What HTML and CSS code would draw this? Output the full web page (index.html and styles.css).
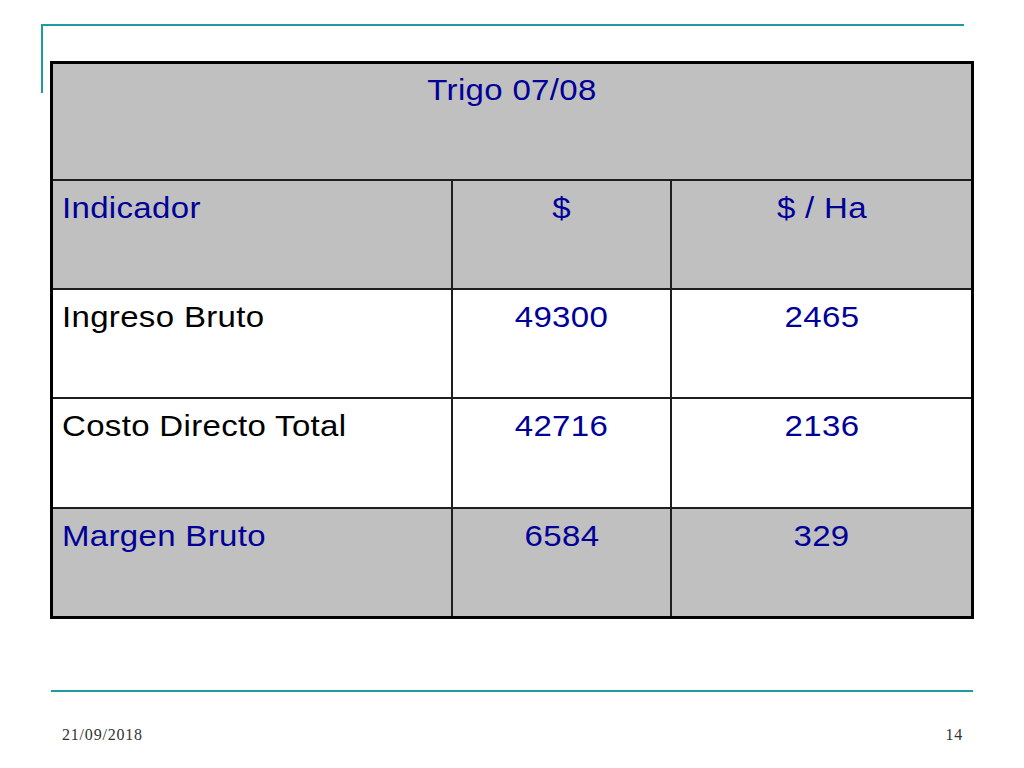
FILE: index.html
```html
<!DOCTYPE html>
<html lang="es">
<head>
<meta charset="utf-8">
<title>Trigo 07/08</title>
<link rel="stylesheet" href="styles.css">
</head>
<body>
<div class="slide">
  <div class="bracket"></div>
  <div class="grid">
    <div class="cell title gray blue"><span class="t">Trigo 07/08</span></div>
    <div class="cell gray blue"><span class="t">Indicador</span></div>
    <div class="cell gray blue center"><span class="t">$</span></div>
    <div class="cell gray blue center"><span class="t">$ / Ha</span></div>
    <div class="cell white"><span class="t">Ingreso Bruto</span></div>
    <div class="cell white blue center"><span class="t">49300</span></div>
    <div class="cell white blue center"><span class="t">2465</span></div>
    <div class="cell white"><span class="t">Costo Directo Total</span></div>
    <div class="cell white blue center"><span class="t">42716</span></div>
    <div class="cell white blue center"><span class="t">2136</span></div>
    <div class="cell gray blue"><span class="t">Margen Bruto</span></div>
    <div class="cell gray blue center"><span class="t">6584</span></div>
    <div class="cell gray blue center"><span class="t">329</span></div>
  </div>
  <div class="rule"></div>
  <div class="footer">
    <span>21/09/2018</span>
    <span>14</span>
  </div>
</div>
</body>
</html>
```

FILE: styles.css
```css
html, body {
  margin: 0;
  padding: 0;
  background: #ffffff;
}

.slide {
  position: relative;
  width: 1024px;
  height: 768px;
  overflow: hidden;
  padding-top: 61px;
  box-sizing: border-box;
}

.bracket {
  position: absolute;
  left: 41px;
  top: 24px;
  width: 921px;
  height: 67px;
  border-top: 2px solid #1c9c9c;
  border-left: 2px solid #1c9c9c;
}

.grid {
  margin-left: 50px;
  width: 918px;
  display: grid;
  grid-template-columns: 398px 217px 299px;
  grid-template-rows: 115px 107px 107px 108px 107px;
  gap: 2px;
  background: #1e1e1e;
  border: 3px solid #000000;
}

.cell {
  font-family: "Liberation Sans", Arial, sans-serif;
  font-size: 30px;
  line-height: 36px;
  letter-spacing: 0.3px;
  color: #000000;
  padding: 9px 10px 0 9px;
}

.t {
  display: inline-block;
  transform: scaleX(1.1);
  transform-origin: left center;
}

.center .t,
.title .t {
  transform-origin: center center;
}

.title {
  grid-column: 1 / -1;
  text-align: center;
  padding-top: 8px;
}

.center {
  text-align: center;
  padding-left: 0;
  padding-right: 0;
}

.gray {
  background: #c0c0c0;
}

.white {
  background: #ffffff;
}

.blue {
  color: #000099;
}

.rule {
  margin-left: 51px;
  width: 922px;
  height: 2px;
  margin-top: 71px;
  background: #1c9c9c;
}

.footer {
  display: flex;
  justify-content: space-between;
  margin-left: 62px;
  width: 901px;
  margin-top: 34px;
  font-family: "Liberation Serif", "Times New Roman", serif;
  font-size: 16px;
  line-height: 18px;
  letter-spacing: 0.8px;
  color: #333333;
}
```
